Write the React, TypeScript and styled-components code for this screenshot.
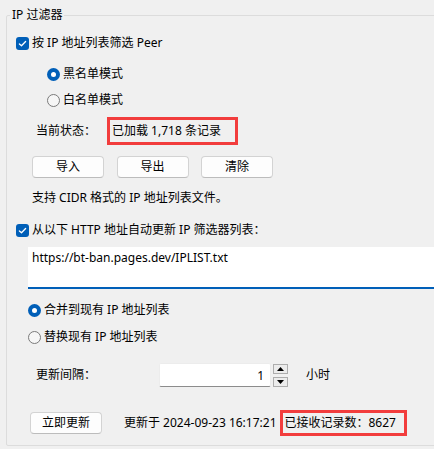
import React from 'react';
import styled, { createGlobalStyle } from 'styled-components';

const Global = createGlobalStyle`
  html, body { margin: 0; padding: 0; background: #f0f0f0; overflow: hidden; }
  body {
    font-family: "Noto Sans", "Noto Sans CJK SC", sans-serif;
    font-size: 12px;
    color: #000;
  }
`;

const Page = styled.div`
  width: 434px;
  height: 449px;
  overflow: hidden;
  box-sizing: border-box;
  padding: 7px 0 0 6px;
`;

const Group = styled.fieldset`
  margin: 0;
  padding: 0 0 9px 0;
  width: 450px;
  box-sizing: border-box;
  border: 1px solid #dcdcdc;
  border-radius: 2px;
  min-width: 0;
`;

const Legend = styled.legend`
  margin-left: 3px;
  padding: 0 2px;
  line-height: 16px;
  font-size: 12px;
`;

const Body = styled.div`
  display: flex;
  flex-direction: column;
`;

const Row = styled.div<{ $mt: number; $h: number; $x: number; $gap?: number }>`
  display: flex;
  align-items: center;
  margin-top: ${p => p.$mt}px;
  height: ${p => p.$h}px;
  padding-left: ${p => p.$x}px;
  gap: ${p => p.$gap ?? 0}px;
  white-space: nowrap;
`;

const CheckBox = styled.span`
  width: 13px;
  height: 13px;
  border-radius: 3px;
  background: #005fb8;
  display: inline-flex;
  align-items: center;
  justify-content: center;
  margin-right: 3px;
  flex: none;
`;

const Radio = styled.span<{ $on?: boolean }>`
  width: 13px;
  height: 13px;
  border-radius: 50%;
  box-sizing: border-box;
  flex: none;
  margin-right: 3px;
  background: ${p => (p.$on ? '#005fb8' : '#f6f6f6')};
  border: ${p => (p.$on ? 'none' : '1px solid #7a7a7a')};
  display: inline-flex;
  align-items: center;
  justify-content: center;
  &::after {
    content: '';
    display: ${p => (p.$on ? 'block' : 'none')};
    width: 5px;
    height: 5px;
    border-radius: 50%;
    background: #fff;
  }
`;

const Label = styled.span<{ $w?: number }>`
  line-height: 16px;
  ${p => (p.$w ? `width: ${p.$w}px; flex: none;` : '')}
`;

const Highlight = styled.div<{ $h: number; $pl: number; $pr: number }>`
  height: ${p => p.$h}px;
  box-sizing: border-box;
  border: 3px solid #f23d3d;
  padding: 0 ${p => p.$pr}px 0 ${p => p.$pl}px;
  display: flex;
  align-items: center;
  line-height: 16px;
`;

const Button = styled.button`
  width: 72px;
  height: 22px;
  box-sizing: border-box;
  background: #fdfdfd;
  border: 1px solid #d3d3d3;
  border-bottom-color: #bcbcbc;
  border-radius: 4px;
  font: inherit;
  color: #000;
  padding: 0;
  line-height: 16px;
`;

const UrlBox = styled.div`
  margin-top: 7px;
  margin-left: 21px;
  height: 42px;
  box-sizing: border-box;
  background: #fff;
  border-bottom: 2px solid #005fb8;
  padding: 3px 4px 0;
  line-height: 16px;
`;

const SpinInput = styled.div`
  width: 112px;
  height: 24px;
  box-sizing: border-box;
  background: #fff;
  border: 1px solid #ececec;
  border-bottom: 1px solid #8c8c8c;
  border-radius: 2px;
  display: flex;
  align-items: center;
  justify-content: flex-end;
  padding-right: 6px;
  flex: none;
`;

const SpinButtons = styled.div`
  display: flex;
  flex-direction: column;
  gap: 3px;
  margin-left: 2px;
  margin-right: 18px;
  flex: none;
`;

const SpinButton = styled.span`
  width: 15px;
  height: 10px;
  box-sizing: border-box;
  border: 1px solid #adadad;
  background: #ececec;
  display: flex;
  align-items: center;
  justify-content: center;
`;

const UpdatedAt = styled.span`
  line-height: 16px;
  margin-left: 22px;
  margin-right: 3px;
`;

const Check = () => (
  <svg width="13" height="13" viewBox="0 0 13 13">
    <path d="M3.4 6.9 L5.5 8.8 L9.6 4.5" fill="none" stroke="#fff" strokeWidth="1.3" strokeLinecap="round" strokeLinejoin="round" />
  </svg>
);

const Tri = ({ up }: { up?: boolean }) => (
  <svg width="7" height="4" viewBox="0 0 7 4">
    <path d={up ? 'M0 4 L3.5 0 L7 4 Z' : 'M0 0 L7 0 L3.5 4 Z'} fill="#000" />
  </svg>
);

export default function App() {
  return (
    <>
      <Global />
      <Page>
        <Group>
          <Legend>IP 过滤器</Legend>
          <Body>
            <Row $mt={10} $h={20} $x={9}>
              <CheckBox><Check /></CheckBox>
              <Label>按 IP 地址列表筛选 Peer</Label>
            </Row>
            <Row $mt={11} $h={20} $x={40}>
              <Radio $on />
              <Label>黑名单模式</Label>
            </Row>
            <Row $mt={6} $h={20} $x={40}>
              <Radio />
              <Label>白名单模式</Label>
            </Row>
            <Row $mt={7} $h={28} $x={29}>
              <Label $w={71}>当前状态：</Label>
              <Highlight $h={28} $pl={2} $pr={14}>已加载 1,718 条记录</Highlight>
            </Row>
            <Row $mt={11} $h={22} $x={25} $gap={12.5}>
              <Button>导入</Button>
              <Button>导出</Button>
              <Button>清除</Button>
            </Row>
            <Row $mt={10} $h={20} $x={25}>
              <Label>支持 CIDR 格式的 IP 地址列表文件。</Label>
            </Row>
            <Row $mt={12} $h={20} $x={9}>
              <CheckBox><Check /></CheckBox>
              <Label>从以下 HTTP 地址自动更新 IP 筛选器列表：</Label>
            </Row>
            <UrlBox>https://bt-ban.pages.dev/IPLIST.txt</UrlBox>
            <Row $mt={11} $h={20} $x={21}>
              <Radio $on />
              <Label>合并到现有 IP 地址列表</Label>
            </Row>
            <Row $mt={7} $h={20} $x={21}>
              <Radio />
              <Label>替换现有 IP 地址列表</Label>
            </Row>
            <Row $mt={16} $h={24} $x={29}>
              <Label $w={123}>更新间隔：</Label>
              <SpinInput>1</SpinInput>
              <SpinButtons>
                <SpinButton><Tri up /></SpinButton>
                <SpinButton><Tri /></SpinButton>
              </SpinButtons>
              <Label>小时</Label>
            </Row>
            <Row $mt={23} $h={26} $x={23}>
              <Button>立即更新</Button>
              <UpdatedAt>更新于 2024-09-23 16:17:21</UpdatedAt>
              <Highlight $h={26} $pl={2} $pr={8}>已接收记录数：8627</Highlight>
            </Row>
          </Body>
        </Group>
      </Page>
    </>
  );
}
